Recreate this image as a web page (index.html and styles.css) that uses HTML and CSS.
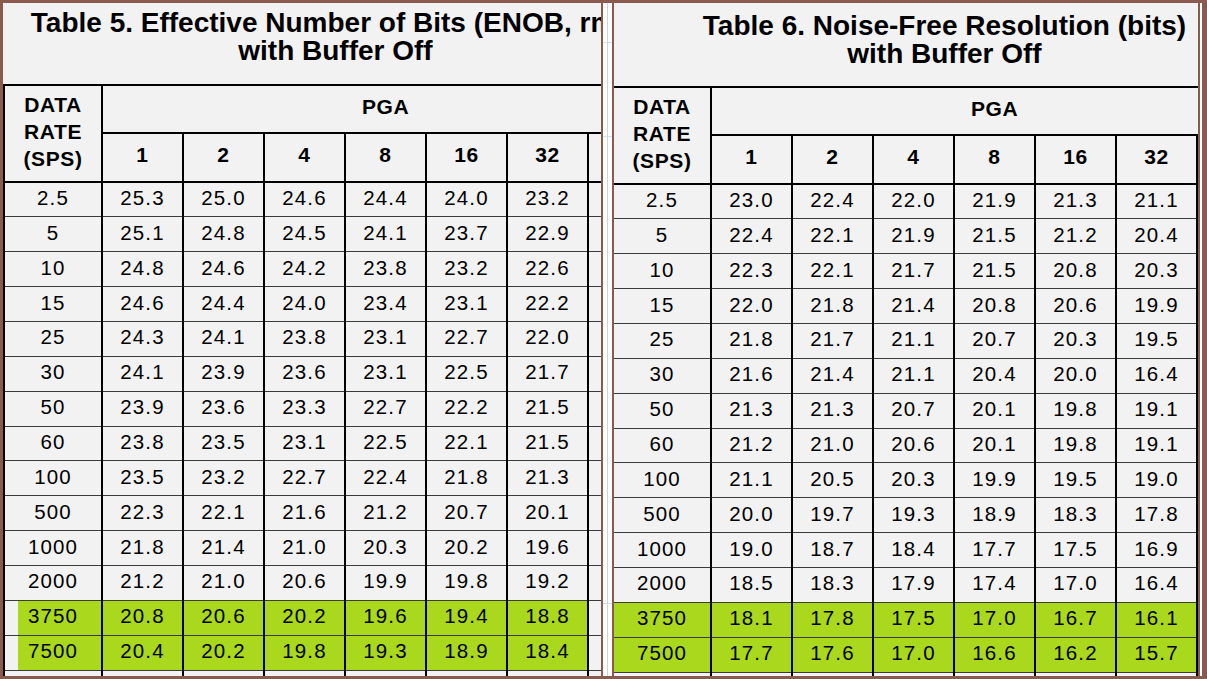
FILE: index.html
```html
<!DOCTYPE html>
<html>
<head>
<meta charset="utf-8">
<title>ENOB and Noise-Free Resolution</title>
<link rel="stylesheet" href="styles.css">
</head>
<body>
<div class="frame">
  <section class="panel panel-left">
    <div class="sheet">
      <div class="title title-left">Table 5. Effective Number of Bits (ENOB, rms)<br>with Buffer Off</div>
      <table class="grid grid-left">
        <colgroup><col class="c-rate"><col class="c-val"><col class="c-val"><col class="c-val"><col class="c-val"><col class="c-val"><col class="c-val"><col class="c-val"></colgroup>
        <thead>
          <tr class="h-pga"><th rowspan="2" class="h-rate">DATA<br>RATE<br>(SPS)</th><th colspan="7">PGA</th></tr>
          <tr class="h-gain"><th>1</th><th>2</th><th>4</th><th>8</th><th>16</th><th>32</th><th></th></tr>
        </thead>
        <tbody>
          <tr><td>2.5</td><td>25.3</td><td>25.0</td><td>24.6</td><td>24.4</td><td>24.0</td><td>23.2</td><td></td></tr>
          <tr><td>5</td><td>25.1</td><td>24.8</td><td>24.5</td><td>24.1</td><td>23.7</td><td>22.9</td><td></td></tr>
          <tr><td>10</td><td>24.8</td><td>24.6</td><td>24.2</td><td>23.8</td><td>23.2</td><td>22.6</td><td></td></tr>
          <tr><td>15</td><td>24.6</td><td>24.4</td><td>24.0</td><td>23.4</td><td>23.1</td><td>22.2</td><td></td></tr>
          <tr><td>25</td><td>24.3</td><td>24.1</td><td>23.8</td><td>23.1</td><td>22.7</td><td>22.0</td><td></td></tr>
          <tr><td>30</td><td>24.1</td><td>23.9</td><td>23.6</td><td>23.1</td><td>22.5</td><td>21.7</td><td></td></tr>
          <tr><td>50</td><td>23.9</td><td>23.6</td><td>23.3</td><td>22.7</td><td>22.2</td><td>21.5</td><td></td></tr>
          <tr><td>60</td><td>23.8</td><td>23.5</td><td>23.1</td><td>22.5</td><td>22.1</td><td>21.5</td><td></td></tr>
          <tr><td>100</td><td>23.5</td><td>23.2</td><td>22.7</td><td>22.4</td><td>21.8</td><td>21.3</td><td></td></tr>
          <tr><td>500</td><td>22.3</td><td>22.1</td><td>21.6</td><td>21.2</td><td>20.7</td><td>20.1</td><td></td></tr>
          <tr><td>1000</td><td>21.8</td><td>21.4</td><td>21.0</td><td>20.3</td><td>20.2</td><td>19.6</td><td></td></tr>
          <tr><td>2000</td><td>21.2</td><td>21.0</td><td>20.6</td><td>19.9</td><td>19.8</td><td>19.2</td><td></td></tr>
          <tr class="hl"><td class="inset">3750</td><td>20.8</td><td>20.6</td><td>20.2</td><td>19.6</td><td>19.4</td><td>18.8</td><td class="plain"></td></tr>
          <tr class="hl"><td class="inset">7500</td><td>20.4</td><td>20.2</td><td>19.8</td><td>19.3</td><td>18.9</td><td>18.4</td><td class="plain"></td></tr>
          <tr class="more"><td></td><td></td><td></td><td></td><td></td><td></td><td></td><td></td></tr>
        </tbody>
      </table>
    </div>
  </section>
  <div class="divider"></div>
  <section class="panel panel-right">
    <div class="sheet sheet-right">
      <div class="title title-right">Table 6. Noise-Free Resolution (bits)<br>with Buffer Off</div>
      <table class="grid grid-right">
        <colgroup><col class="c-rate"><col class="c-val"><col class="c-val"><col class="c-val"><col class="c-val"><col class="c-val"><col class="c-val"><col class="c-val"></colgroup>
        <thead>
          <tr class="h-pga"><th rowspan="2" class="h-rate">DATA<br>RATE<br>(SPS)</th><th colspan="7">PGA</th></tr>
          <tr class="h-gain"><th>1</th><th>2</th><th>4</th><th>8</th><th>16</th><th>32</th><th></th></tr>
        </thead>
        <tbody>
          <tr><td>2.5</td><td>23.0</td><td>22.4</td><td>22.0</td><td>21.9</td><td>21.3</td><td>21.1</td><td></td></tr>
          <tr><td>5</td><td>22.4</td><td>22.1</td><td>21.9</td><td>21.5</td><td>21.2</td><td>20.4</td><td></td></tr>
          <tr><td>10</td><td>22.3</td><td>22.1</td><td>21.7</td><td>21.5</td><td>20.8</td><td>20.3</td><td></td></tr>
          <tr><td>15</td><td>22.0</td><td>21.8</td><td>21.4</td><td>20.8</td><td>20.6</td><td>19.9</td><td></td></tr>
          <tr><td>25</td><td>21.8</td><td>21.7</td><td>21.1</td><td>20.7</td><td>20.3</td><td>19.5</td><td></td></tr>
          <tr><td>30</td><td>21.6</td><td>21.4</td><td>21.1</td><td>20.4</td><td>20.0</td><td>16.4</td><td></td></tr>
          <tr><td>50</td><td>21.3</td><td>21.3</td><td>20.7</td><td>20.1</td><td>19.8</td><td>19.1</td><td></td></tr>
          <tr><td>60</td><td>21.2</td><td>21.0</td><td>20.6</td><td>20.1</td><td>19.8</td><td>19.1</td><td></td></tr>
          <tr><td>100</td><td>21.1</td><td>20.5</td><td>20.3</td><td>19.9</td><td>19.5</td><td>19.0</td><td></td></tr>
          <tr><td>500</td><td>20.0</td><td>19.7</td><td>19.3</td><td>18.9</td><td>18.3</td><td>17.8</td><td></td></tr>
          <tr><td>1000</td><td>19.0</td><td>18.7</td><td>18.4</td><td>17.7</td><td>17.5</td><td>16.9</td><td></td></tr>
          <tr><td>2000</td><td>18.5</td><td>18.3</td><td>17.9</td><td>17.4</td><td>17.0</td><td>16.4</td><td></td></tr>
          <tr class="hl"><td>3750</td><td>18.1</td><td>17.8</td><td>17.5</td><td>17.0</td><td>16.7</td><td>16.1</td><td class="plain"></td></tr>
          <tr class="hl"><td>7500</td><td>17.7</td><td>17.6</td><td>17.0</td><td>16.6</td><td>16.2</td><td>15.7</td><td class="plain"></td></tr>
          <tr class="more"><td></td><td></td><td></td><td></td><td></td><td></td><td></td><td></td></tr>
        </tbody>
      </table>
    </div>
  </section>
  <div class="edge"></div>
</div>
</body>
</html>
```
FILE: styles.css
```css
html, body {
  margin: 0;
  padding: 0;
  background: #8b5a4f;
}
body {
  width: 1207px;
  height: 679px;
  overflow: hidden;
  font-family: "Liberation Sans", Arial, sans-serif;
  color: #000;
}
.frame {
  display: flex;
  box-sizing: border-box;
  height: 679px;
  padding: 3px 0 3px 3px;
}
.panel {
  flex: none;
  background: #f2f2f2;
  overflow: hidden;
}
.panel-left { width: 598px; }
.panel-right { width: 584px; }
.divider {
  flex: none;
  width: 9px;
  margin: 0 2px;
  background-color: #ffffff;
  background-image:
    linear-gradient(#d4d4d4, #d4d4d4),
    linear-gradient(#cfe2ef, #cfe2ef),
    linear-gradient(#cfe2ef, #cfe2ef),
    linear-gradient(#cfe2ef, #cfe2ef);
  background-size: 1px 100%, 100% 1px, 100% 1px, 100% 1px;
  background-position: 4px 0, 0 39px, 0 133px, 0 600px;
  background-repeat: no-repeat;
}
.edge {
  flex: none;
  width: 2px;
  margin: 0 5px 0 2px;
  background: #ffffff;
}
.sheet {
  width: 665px;
}
.sheet-right {
  margin-left: -2px;
}
.title {
  box-sizing: border-box;
  font-weight: 700;
  font-size: 28px;
  line-height: 28px;
  text-align: center;
  white-space: nowrap;
}
.title-left {
  height: 81px;
  padding-top: 6px;
}
.title-right {
  height: 83px;
  padding-top: 9px;
}
.grid {
  border-collapse: collapse;
  table-layout: fixed;
  width: 665px;
  border-top: 2px solid #000;
  border-left: 2px solid #000;
}
.c-rate { width: 98px; }
.c-val { width: 81px; }
.grid th,
.grid td {
  padding: 0;
  text-align: center;
  vertical-align: middle;
  border-left: 2px solid #000;
  border-right: 2px solid #000;
}
.grid th {
  font-weight: 700;
  font-size: 21px;
  letter-spacing: 0.6px;
  border-bottom: 2px solid #000;
  padding-bottom: 4px;
}
.h-rate {
  line-height: 27px;
  padding-bottom: 0;
}
.h-pga { height: 47.5px; }
.h-gain { height: 49.5px; }
.grid td {
  font-size: 20.5px;
  letter-spacing: 1.1px;
  border-bottom: 1px solid #3c3c3c;
  padding-bottom: 3px;
}
.grid tbody tr { height: 34.86px; }
.hl td { background: #a9d81c; }
.hl td.inset {
  background: linear-gradient(to right, #f2f2f2 13px, #a9d81c 13px);
}
.hl td.plain { background: #f2f2f2; }
```
